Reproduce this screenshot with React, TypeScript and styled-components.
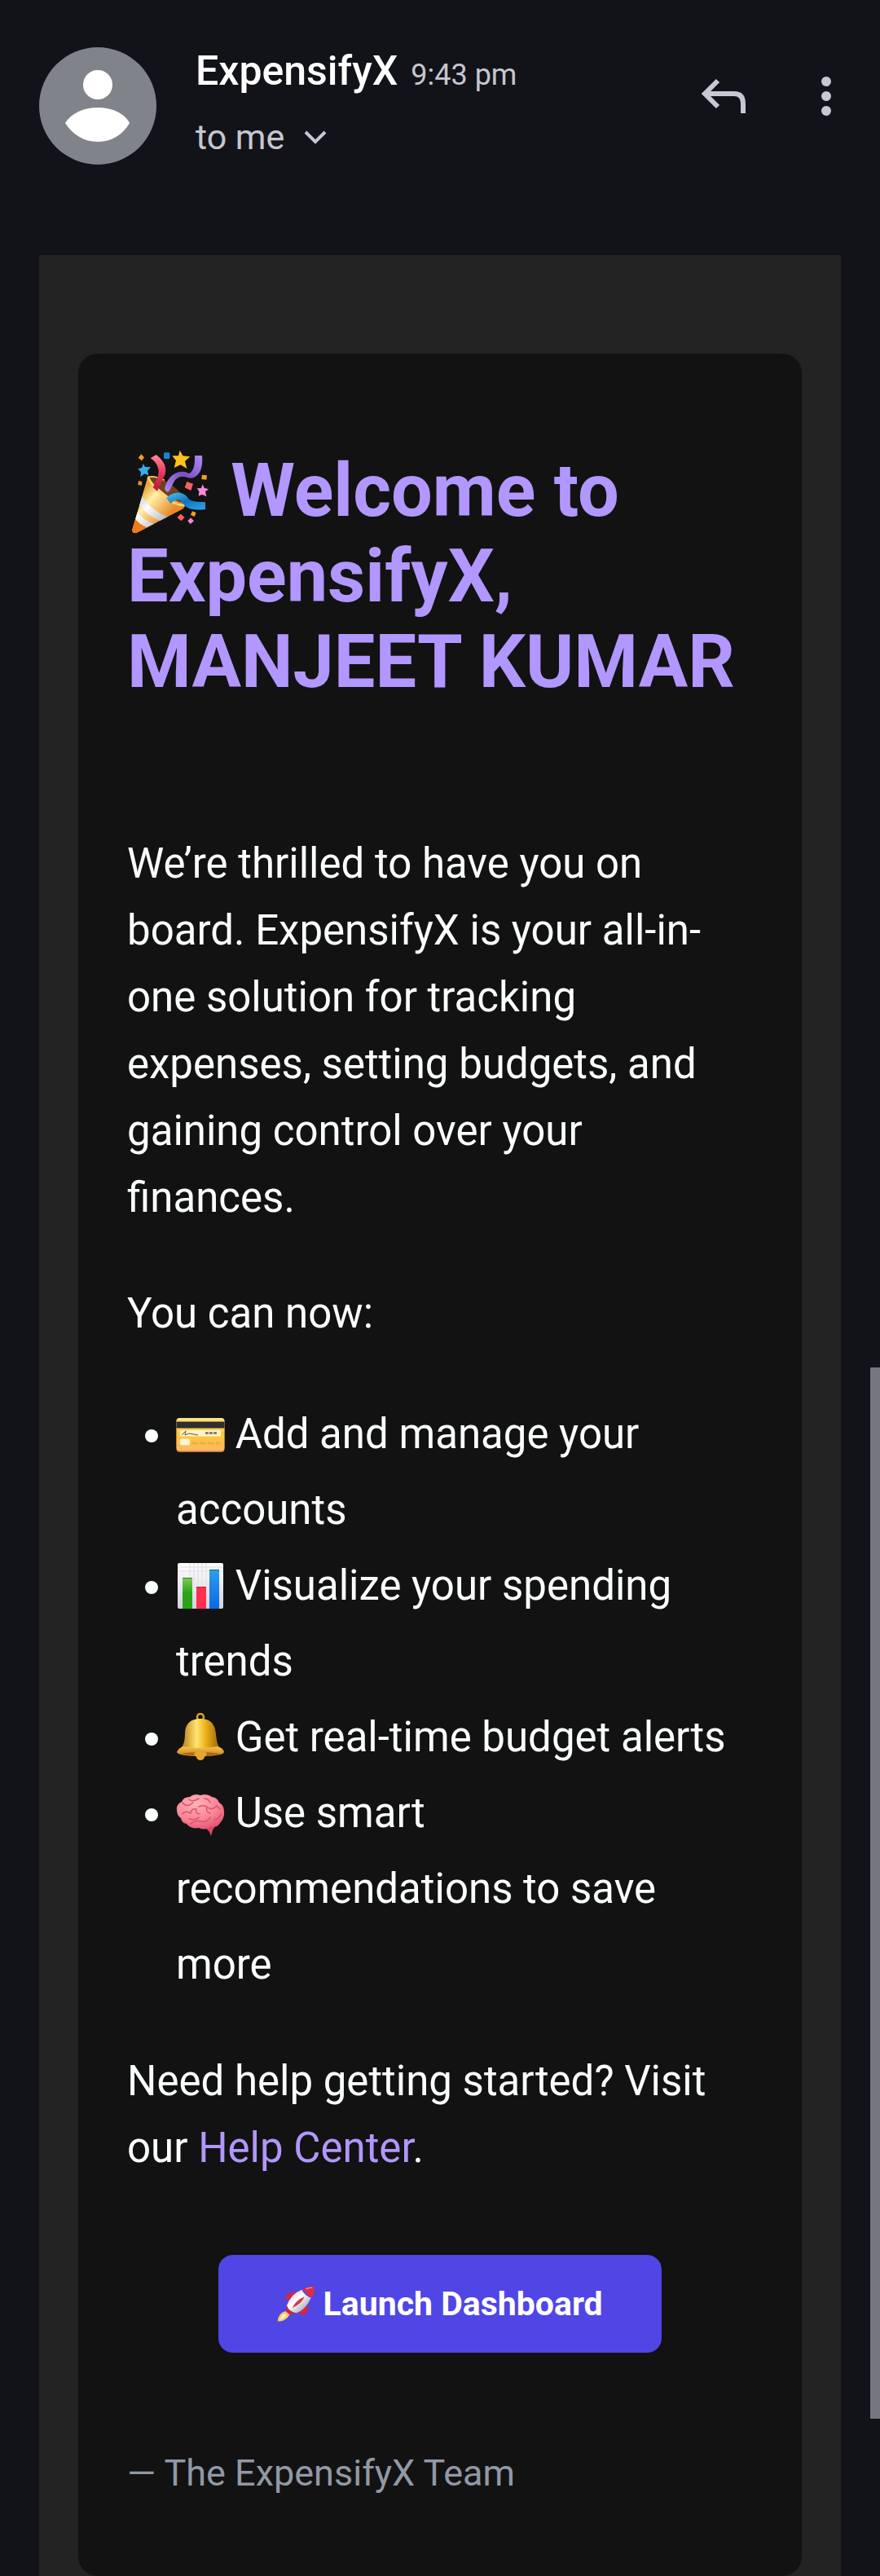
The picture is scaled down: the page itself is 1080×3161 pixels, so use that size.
import React from "react";
import styled, { createGlobalStyle } from "styled-components";

const GlobalStyle = createGlobalStyle`
  * { box-sizing: border-box; }
  body {
    margin: 0;
    background: #121318;
    font-family: Roboto, "Liberation Sans", sans-serif;
  }
`;

const Page = styled.div`
  position: relative;
  background: #121318;
  color: #fafffd;
`;

const Header = styled.header`
  display: flex;
  align-items: flex-start;
  padding: 58px 48px 0;
  height: 313px;
`;

const Avatar = styled.svg`
  flex: none;
  width: 144px;
  height: 144px;
`;

const Sender = styled.div`
  flex: 1;
  display: flex;
  flex-direction: column;
  gap: 18px;
  margin-left: 48px;
`;

const SenderLine = styled.div`
  display: flex;
  align-items: baseline;
  gap: 16px;
  line-height: 58px;
`;

const SenderName = styled.span`
  font-size: 50px;
  font-weight: 500;
  color: #ffffff;
`;

const Time = styled.time`
  font-size: 36px;
  color: #c6c6d0;
`;

const Recipient = styled.button`
  display: flex;
  align-items: center;
  gap: 24px;
  align-self: flex-start;
  padding: 0;
  border: 0;
  background: none;
  color: #c6c6d0;
  font: inherit;
  font-size: 43px;
  line-height: 58px;
  cursor: pointer;
`;

const Actions = styled.div`
  display: flex;
  gap: 54px;
  margin-right: -18px;
  padding-top: 24px;
`;

const IconButton = styled.button`
  display: flex;
  padding: 0;
  border: 0;
  background: none;
  color: #c8c8d2;
  cursor: pointer;
`;

const Panel = styled.main`
  margin: 0 48px;
  padding: 121px 48px 0;
  background: #232323;
`;

const Card = styled.article`
  padding: 116px 60px 90px;
  border-radius: 24px;
  background: #121212;
`;

const Title = styled.h1`
  margin: 0 0 154px;
  color: #b197ff;
  font-size: 90px;
  font-weight: 700;
  line-height: 105px;
`;

const Paragraph = styled.p`
  margin: 0 0 60px;
  font-size: 51px;
  line-height: 82px;
`;

const FeatureList = styled.ul`
  margin: 0 0 56px;
  padding-left: 60px;
  font-size: 51px;
  line-height: 93px;
`;

const Emoji = styled.svg<{ $size: number; $drop: number }>`
  width: ${(p) => p.$size}px;
  height: ${(p) => p.$size}px;
  vertical-align: -${(p) => p.$drop}px;
`;

const HelpLink = styled.a`
  color: #b197fc;
  text-decoration: none;
`;

const ButtonRow = styled.div`
  display: flex;
  justify-content: center;
  margin: 90px 0 112px;
`;

const LaunchButton = styled.button`
  height: 120px;
  padding: 0 72px;
  border: 0;
  border-radius: 18px;
  background: #4f46e5;
  color: #ffffff;
  font: inherit;
  font-size: 41px;
  font-weight: 700;
  cursor: pointer;
`;

const Signature = styled.p`
  margin: 0;
  color: #9298a6;
  font-size: 45px;
  line-height: 72px;
`;

const ScrollThumb = styled.div`
  position: absolute;
  top: 1678px;
  right: 0;
  width: 12px;
  height: 1290px;
  background: #76767e;
`;

const PartyPopper = () => (
  <Emoji $size={105} $drop={22} viewBox="48 60 315 315" role="img" aria-label="Party popper">
    <defs>
      <linearGradient id="cone" x1="90" y1="230" x2="190" y2="320" gradientUnits="userSpaceOnUse">
        <stop offset="0" stopColor="#e9a23b" />
        <stop offset=".35" stopColor="#fff0a8" />
        <stop offset="1" stopColor="#e8892a" />
      </linearGradient>
      <linearGradient id="coneWhite" x1="90" y1="240" x2="180" y2="330" gradientUnits="userSpaceOnUse">
        <stop offset="0" stopColor="#c9c9d2" />
        <stop offset=".4" stopColor="#ffffff" />
        <stop offset="1" stopColor="#b9b9c4" />
      </linearGradient>
      <linearGradient id="redRibbon" x1="0" y1="0" x2="0" y2="1">
        <stop offset="0" stopColor="#ff8a9c" />
        <stop offset=".5" stopColor="#e8375c" />
        <stop offset="1" stopColor="#b5173f" />
      </linearGradient>
      <linearGradient id="purpleRibbon" x1="1" y1="0" x2="0" y2="1">
        <stop offset="0" stopColor="#b18cf0" />
        <stop offset=".5" stopColor="#7a50c8" />
        <stop offset="1" stopColor="#b08aee" />
      </linearGradient>
      <linearGradient id="blueRibbon" x1="0" y1="0" x2="1" y2="1">
        <stop offset="0" stopColor="#49c6f5" />
        <stop offset=".5" stopColor="#1273bd" />
        <stop offset="1" stopColor="#2ba6ee" />
      </linearGradient>
      <clipPath id="coneClip">
        <path d="M124 166L67 360Q66 375 82 372L250 285Q262 276 262 262Q225 260 180 222Q140 190 124 166Z" />
      </clipPath>
    </defs>
    <path d="M124 166C150 158 195 178 232 212C262 240 270 268 256 283C238 296 190 260 160 232C130 202 116 176 124 166Z" fill="#70401f" />
    <g clipPath="url(#coneClip)">
      <path d="M60 150H280V390H60Z" fill="url(#cone)" />
      <path d="M101 235Q140 295 205 315L175 330Q115 305 92 266Z" fill="url(#coneWhite)" />
      <path d="M82 290Q105 325 150 340L125 355Q90 338 74 316Z" fill="url(#coneWhite)" />
      <path d="M74 316Q92 342 125 353L75 380H55Z" fill="#ef7a1d" />
    </g>
    <path d="M125 167Q140 200 180 233Q225 272 260 270" fill="none" stroke="#fbd768" strokeWidth="8" />
    <path d="M124 166Q150 160 185 178" fill="none" stroke="#f8d064" strokeWidth="5" />
    <path d="M134 97L155 84Q184 106 189 132Q193 152 181 171L159 218L143 204L158 172Q168 150 161 130Q153 108 134 97Z" fill="url(#redRibbon)" />
    <path d="M186 208Q200 158 238 148Q258 143 276 153Q299 143 297 87H324Q329 146 300 164Q284 175 263 166Q240 160 223 179L204 217Q192 228 186 208Z" fill="url(#purpleRibbon)" />
    <path d="M192 244Q214 221 243 224Q264 228 274 246Q287 260 336 258V285Q288 291 267 277Q249 263 243 250Q228 247 208 263Z" fill="url(#blueRibbon)" />
    <path d="M242 68L253 88L280 91L261 108L268 135L245 121L221 132L228 106L214 88L237 88Z" fill="#fbc21c" />
    <path d="M107 117L114 129L135 130L123 143L127 160L112 154L97 166L99 148L88 136L103 132Z" fill="#35aef0" />
    <path d="M326 193L332 206L348 211L336 219L340 238L324 230L311 236L313 219L305 208L321 207Z" fill="#f68bd5" />
    <rect x="183" y="76" width="22" height="23" rx="4" fill="#1486d4" />
    <path d="M100 82L111 94L102 106L89 95Z" fill="#f79a20" />
    <path d="M90 180L103 183L102 197L88 195Z" fill="#e99526" />
    <path d="M324 158L342 160L340 176L322 174Z" fill="#f5a01e" />
    <path d="M268 183L291 191L283 216L260 205Z" fill="#f2635e" />
    <path d="M245 302L260 315L247 328L232 315Z" fill="#f2605f" />
    <path d="M288 292L302 298L296 312L282 305Z" fill="#f3a026" />
    <path d="M282 316L294 328L281 339L271 328Z" fill="#f787cd" />
  </Emoji>
);

const CreditCard = () => (
  <Emoji $size={60} $drop={13} viewBox="0 0 60 60" role="img" aria-label="Credit card">
    <defs>
      <linearGradient id="card" x1="0" y1="0" x2="0" y2="1">
        <stop offset="0" stopColor="#ffe38c" />
        <stop offset=".5" stopColor="#fdc93a" />
        <stop offset="1" stopColor="#fbb768" />
      </linearGradient>
    </defs>
    <rect x=".5" y="10" width="59" height="42" rx="4" fill="#c4703a" />
    <rect x=".5" y="10" width="59" height="40.500" rx="4" fill="url(#card)" />
    <rect x=".5" y="14.500" width="59" height="8" fill="#2f302b" />
    <rect x="5" y="25" width="50" height="7.500" rx="1" fill="#fff3c4" />
    <path d="M7 31L12 26L11 31L16 29L27 31" fill="none" stroke="#5c564a" strokeWidth="1" />
    <path d="M36 28.500H50" stroke="#77705c" strokeWidth="2.500" strokeDasharray="4 1" />
    <rect x="5" y="35.500" width="12" height="8" rx="2" fill="#fff2cf" />
    <path d="M19 41H54" stroke="#eeb03a" strokeWidth="3" strokeDasharray="8 2" />
  </Emoji>
);

const BarChart = () => (
  <Emoji $size={60} $drop={13} viewBox="0 0 60 60" role="img" aria-label="Bar chart">
    <defs>
      <linearGradient id="sheet" x1="0" y1="0" x2="0" y2="1">
        <stop offset="0" stopColor="#ffffff" />
        <stop offset="1" stopColor="#d3d3de" />
      </linearGradient>
      <linearGradient id="greenBar" x1="0" y1="0" x2="0" y2="1">
        <stop offset="0" stopColor="#7fca5c" />
        <stop offset=".5" stopColor="#2aa416" />
      </linearGradient>
      <linearGradient id="blueBar" x1="0" y1="0" x2="0" y2="1">
        <stop offset="0" stopColor="#2f9fe8" />
        <stop offset="1" stopColor="#0968e6" />
      </linearGradient>
    </defs>
    <rect x="2" y="2" width="56" height="56" rx="2" fill="url(#sheet)" />
    <path d="M2 7H58M2 12H58M17 2V25M22 2V30M27 2V30M32 2V30M37 2V30" stroke="#dcdce4" strokeWidth="1" />
    <rect x="8" y="20" width="12" height="38" fill="url(#greenBar)" />
    <path d="M8 20.500H20" stroke="#2d7f1d" />
    <rect x="25" y="31" width="12" height="27" fill="#ff2f50" />
    <path d="M25 31.500H37" stroke="#b81c3c" />
    <rect x="41" y="10" width="12" height="48" fill="url(#blueBar)" />
    <path d="M41 10.500H53" stroke="#145a9d" />
  </Emoji>
);

const Bell = () => (
  <Emoji $size={60} $drop={13} viewBox="0 0 60 60" role="img" aria-label="Bell">
    <defs>
      <linearGradient id="bell" x1="0" y1="0" x2="1" y2="0">
        <stop offset="0" stopColor="#b97609" />
        <stop offset=".4" stopColor="#ffe574" />
        <stop offset=".65" stopColor="#e9ae18" />
        <stop offset="1" stopColor="#9b5e0b" />
      </linearGradient>
      <linearGradient id="bellRim" x1="0" y1="0" x2="0" y2="1">
        <stop offset="0" stopColor="#f6c64c" />
        <stop offset="1" stopColor="#c97f15" />
      </linearGradient>
    </defs>
    <circle cx="30" cy="5" r="4" fill="none" stroke="#dca32d" strokeWidth="2.500" />
    <path d="M6 44Q11 37 11 26C11 13 18 7 30 7S48 13 49 26Q50 38 54 44Z" fill="url(#bell)" />
    <path d="M1 48Q3 43 9 41Q30 45 51 41Q58 43 59 48Q57 53 30 53T1 48Z" fill="url(#bellRim)" />
    <path d="M5 50Q30 46 55 50Q30 54 5 50Z" fill="#a9650f" />
    <path d="M22 49Q30 45 38 49Q38 52 35 54Q34 58 30 58T25 54Q22 52 22 49Z" fill="#e3a632" />
  </Emoji>
);

const Brain = () => (
  <Emoji $size={60} $drop={13} viewBox="0 0 60 60" role="img" aria-label="Brain">
    <defs>
      <radialGradient id="brain" cx=".4" cy=".25" r=".8">
        <stop offset="0" stopColor="#ffb3b6" />
        <stop offset=".6" stopColor="#fb8496" />
        <stop offset="1" stopColor="#e5526f" />
      </radialGradient>
    </defs>
    <path d="M31 42L41 53L43 58L45 51L51 40Z" fill="#d94868" />
    <path d="M1 26Q0 19 7 16Q9 10 17 10Q22 5 30 8Q37 5 44 10Q51 11 53 17Q59 20 59 28Q60 36 54 42Q50 49 42 46Q37 52 28 48Q18 50 13 43Q7 42 6 36Q1 33 1 26Z" fill="url(#brain)" />
    <g fill="none" stroke="#d95470" strokeWidth="1.500" strokeLinecap="round">
      <path d="M8 17Q13 24 21 17M16 13Q20 17 28 12M28 22Q34 19 39 23T50 21M25 25Q19 24 18 30Q11 26 8 31M38 23Q36 28 42 30M25 26Q23 30 29 31M18 43Q24 38 31 40T42 35M16 37Q25 39 28 35M47 38Q54 36 55 31M35 12Q40 12 42 17M50 21L54 25" />
    </g>
  </Emoji>
);

const Rocket = () => (
  <Emoji $size={46} $drop={9} viewBox="60 69 138 138" role="img" aria-label="Rocket">
    <defs>
      <linearGradient id="hull" x1="110" y1="95" x2="165" y2="155" gradientUnits="userSpaceOnUse">
        <stop offset="0" stopColor="#c4c8d4" />
        <stop offset=".45" stopColor="#ffffff" />
        <stop offset="1" stopColor="#aeb0c0" />
      </linearGradient>
    </defs>
    <path d="M90 165Q65 172 62 202Q90 206 107 177Z" fill="#ffc76a" />
    <path d="M86 175Q72 184 70 197Q85 195 94 180Z" fill="#fff0bd" />
    <path d="M133 94Q104 90 86 116L105 124Z" fill="#cf2940" />
    <path d="M176 140Q178 168 157 182Q146 180 143 170Z" fill="#cf2940" />
    <path d="M93 145Q90 168 107 178Q125 179 134 169Z" fill="#c82640" />
    <path d="M152 86Q182 72 197 75Q202 92 188 116Z" fill="#dd2c45" />
    <path d="M151 86Q160 106 185 116Q165 160 132 172Q104 168 96 144Q112 101 151 86Z" fill="url(#hull)" />
    <path d="M117 153Q129 125 161 112Q152 137 117 153Z" fill="#d8374c" />
    <path d="M166 83Q184 76 190 79" fill="none" stroke="#f58b94" strokeWidth="4" />
  </Emoji>
);

const features = [
  { icon: <CreditCard />, text: "Add and manage your accounts" },
  { icon: <BarChart />, text: "Visualize your spending trends" },
  { icon: <Bell />, text: "Get real-time budget alerts" },
  { icon: <Brain />, text: "Use smart recommendations to save more" },
];

export default function App() {
  return (
    <Page>
      <GlobalStyle />
      <Header>
        <Avatar viewBox="0 0 144 144" role="img" aria-label="Sender avatar">
          <circle cx="72" cy="72" r="72" fill="#80848a" />
          <circle cx="72" cy="46" r="18" fill="#ffffff" />
          <path d="M32 93C39 81 55 74 72 74S105 81 111 93C103 107 89 116 72 116S41 107 32 93Z" fill="#ffffff" />
        </Avatar>
        <Sender>
          <SenderLine>
            <SenderName>ExpensifyX</SenderName>
            <Time>9:43 pm</Time>
          </SenderLine>
          <Recipient type="button">
            to me
            <svg width="28" height="18" viewBox="0 0 28 18" fill="none" stroke="currentColor" strokeWidth="4" aria-hidden="true">
              <path d="M2 3L14 15L26 3" />
            </svg>
          </Recipient>
        </Sender>
        <Actions>
          <IconButton type="button" aria-label="Reply">
            <svg width="72" height="72" viewBox="0 0 72 72" fill="none" stroke="currentColor" strokeWidth="6" aria-hidden="true">
              <path d="M29 17L13 33L29 49M14 33H49Q60 33 60 45V57" />
            </svg>
          </IconButton>
          <IconButton type="button" aria-label="More options">
            <svg width="72" height="72" viewBox="0 0 72 72" fill="currentColor" aria-hidden="true">
              <circle cx="36" cy="18" r="6" />
              <circle cx="36" cy="36" r="6" />
              <circle cx="36" cy="54" r="6" />
            </svg>
          </IconButton>
        </Actions>
      </Header>
      <Panel>
        <Card>
          <Title>
            <PartyPopper /> Welcome to ExpensifyX, MANJEET KUMAR
          </Title>
          <Paragraph>
            We’re thrilled to have you on board. ExpensifyX is your all-in-one solution for tracking
            expenses, setting budgets, and gaining control over your finances.
          </Paragraph>
          <Paragraph>You can now:</Paragraph>
          <FeatureList>
            {features.map((feature) => (
              <li key={feature.text}>
                {feature.icon} {feature.text}
              </li>
            ))}
          </FeatureList>
          <Paragraph>
            Need help getting started? Visit our <HelpLink href="#help">Help Center</HelpLink>.
          </Paragraph>
          <ButtonRow>
            <LaunchButton type="button">
              <Rocket /> Launch Dashboard
            </LaunchButton>
          </ButtonRow>
          <Signature>— The ExpensifyX Team</Signature>
        </Card>
      </Panel>
      <ScrollThumb />
    </Page>
  );
}
